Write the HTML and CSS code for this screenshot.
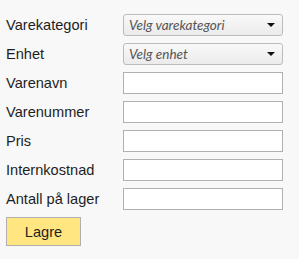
FILE: index.html
```html
<!DOCTYPE html>
<html>
<head>
<meta charset="utf-8">
<link rel="stylesheet" href="styles.css">
</head>
<body>
<form class="form">
  <div class="grid">
    <label class="lbl">Varekategori</label>
    <div class="select"><span class="ph">Velg varekategori</span><span class="arrow"></span></div>
    <label class="lbl">Enhet</label>
    <div class="select"><span class="ph">Velg enhet</span><span class="arrow"></span></div>
    <label class="lbl">Varenavn</label>
    <input class="inp" type="text">
    <label class="lbl">Varenummer</label>
    <input class="inp" type="text">
    <label class="lbl">Pris</label>
    <input class="inp" type="text">
    <label class="lbl">Internkostnad</label>
    <input class="inp" type="text">
    <label class="lbl">Antall på lager</label>
    <input class="inp" type="text">
  </div>
  <button class="btn" type="button">Lagre</button>
</form>
</body>
</html>
```
FILE: styles.css
```css
html, body {
  margin: 0;
  padding: 0;
  background: #f8f8f8;
}
body {
  font-family: "Liberation Sans", Arial, sans-serif;
  font-size: 14.6px;
  color: #1e1e1e;
}
.form {
  padding: 14px 0 0 6px;
}
.grid {
  display: grid;
  grid-template-columns: 117px 160px;
  grid-auto-rows: 22px;
  row-gap: 7px;
  align-items: center;
}
.lbl {
  line-height: 22px;
  white-space: nowrap;
}
.select {
  box-sizing: border-box;
  height: 22px;
  border: 1px solid #bcbcbc;
  border-radius: 3px;
  background: linear-gradient(#f9f9f9, #ebebeb);
  display: flex;
  align-items: center;
  justify-content: space-between;
  padding: 0 6px 0 5px;
}
.ph {
  font-family: Lato, "Open Sans", sans-serif;
  font-style: italic;
  font-size: 13.5px;
  color: #555;
}
.arrow {
  width: 0;
  height: 0;
  border-left: 4px solid transparent;
  border-right: 4px solid transparent;
  border-top: 4px solid #111;
  margin-right: 1px;
}
.inp {
  box-sizing: border-box;
  height: 22px;
  width: 160px;
  margin: 0;
  border: 1px solid #b0b0b0;
  background: #fff;
  padding: 0 4px;
  outline: none;
}
.btn {
  display: block;
  box-sizing: border-box;
  width: 75px;
  height: 29px;
  margin: 7px 0 0 0;
  border: 1px solid #b0b0b0;
  background: #ffe680;
  font-family: "Liberation Sans", Arial, sans-serif;
  font-size: 14.6px;
  color: #1e1e1e;
  padding: 0;
}
```
